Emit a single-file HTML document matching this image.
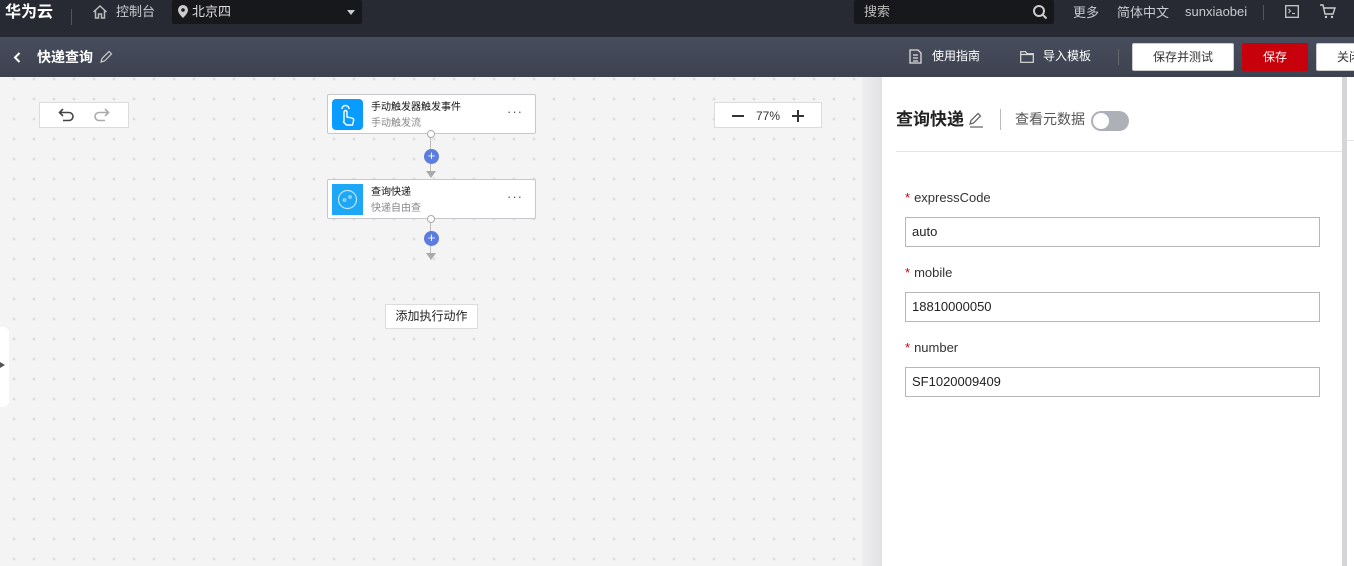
<!DOCTYPE html>
<html><head><meta charset="utf-8"><style>
*{margin:0;padding:0;box-sizing:border-box}
body{width:1354px;height:566px;overflow:hidden;font-family:"Liberation Sans","Noto Sans CJK SC",sans-serif;font-size:12px;position:relative;background:#f4f4f4;line-height:1.15}
.abs{position:absolute}
#top{left:0;top:0;width:1354px;height:37px;background:#272a33;color:#c8cad0}
#bar2{left:0;top:37px;width:1354px;height:40px;background:linear-gradient(#474d5c,#3c4250);color:#fff}
#canvas{left:0;top:77px;width:862px;height:489px;background-color:#f4f4f4;background-image:radial-gradient(circle,#dedede 1.3px,transparent 1.6px);background-size:20px 20px;background-position:4px 12px}
.box{background:#fff;border:1px solid #dcdcdc}
.node{background:#fff;border:1px solid #c8c8cc;border-radius:2px;width:209px;height:40px}
.node .ic{position:absolute;left:4px;top:4px;width:31px;height:31px;border-radius:4px;background:#0a9bff}
.node .t{position:absolute;left:43px;top:7px;font-size:10px;color:#111}
.node .s{position:absolute;left:43px;top:23px;font-size:10px;color:#888}
.node .d{position:absolute;right:12px;top:10px;color:#555;font-size:13px;letter-spacing:1px}
.plus{width:15px;height:15px;border-radius:50%;background:#5d7ce0;color:#fff;font-size:13px;line-height:14px;text-align:center}
.inp{left:905px;width:415px;height:30px;border:1px solid #b6b7bd;background:#fff;padding-left:6px;line-height:28px;font-size:13px;color:#222}
.lbl{left:905px;font-size:13px;color:#333}
.lbl b{color:#c7000b;font-weight:normal;margin-right:4px}
.btn{top:43px;height:28px;border-radius:2px;font-size:12px;text-align:center;line-height:26px}
</style></head><body>
<div id="top" class="abs">
 <div class="abs" style="left:5px;top:4px;font-size:16px;font-weight:bold;color:#fff">华为云</div>
 <div class="abs" style="left:71px;top:9px;width:1px;height:16px;background:#555"></div>
 <svg class="abs" style="left:92px;top:4px" width="16" height="16" viewBox="0 0 16 16"><path d="M1.5 8L8 2l6.5 6M3.5 6.5V14h3v-4h3v4h3V6.5" fill="none" stroke="#bbb" stroke-width="1.5"/></svg>
 <div class="abs" style="left:116px;top:5px;font-size:13px">控制台</div>
 <div class="abs" style="left:172px;top:0;width:190px;height:24px;background:#17181c;border-radius:2px">
  <svg class="abs" style="left:6px;top:5px" width="10" height="13" viewBox="0 0 10 13"><path d="M5 0a5 5 0 0 0-5 5c0 3.5 5 8 5 8s5-4.5 5-8a5 5 0 0 0-5-5z" fill="#ccc"/><circle cx="5" cy="5" r="1.8" fill="#17181c"/></svg>
  <div class="abs" style="left:20px;top:5px;font-size:13px;color:#ddd">北京四</div>
  <div class="abs" style="left:175px;top:10px;border:4px solid transparent;border-top:5px solid #ccc"></div>
 </div>
 <div class="abs" style="left:854px;top:0;width:200px;height:24px;background:#17181c;border-radius:2px">
  <div class="abs" style="left:10px;top:5px;font-size:13px;color:#bbb">搜索</div>
  <svg class="abs" style="left:178px;top:4px" width="16" height="16" viewBox="0 0 16 16"><circle cx="7" cy="7" r="5" fill="none" stroke="#ccc" stroke-width="2"/><path d="M10.5 10.5l4 4" stroke="#ccc" stroke-width="2"/></svg>
 </div>
 <div class="abs" style="left:1073px;top:6px;font-size:13px">更多</div>
 <div class="abs" style="left:1117px;top:6px;font-size:13px">简体中文</div>
 <div class="abs" style="left:1185px;top:5px;font-size:13px">sunxiaobei</div>
 <div class="abs" style="left:1263px;top:5px;width:1px;height:15px;background:#555"></div>
 <svg class="abs" style="left:1285px;top:5px" width="14" height="13" viewBox="0 0 14 13"><rect x=".7" y=".7" width="12.6" height="11.6" fill="none" stroke="#ccc" stroke-width="1.3"/><path d="M3.5 4l2 2-2 2M7 8.5h3" stroke="#ccc" fill="none"/></svg>
 <svg class="abs" style="left:1320px;top:4px" width="16" height="15" viewBox="0 0 16 15"><path d="M0 1h3l2 9h8l2-6H4" fill="none" stroke="#ccc" stroke-width="1.4"/><circle cx="6" cy="13" r="1.2" fill="#ccc"/><circle cx="12" cy="13" r="1.2" fill="#ccc"/></svg>
</div>
<div id="bar2" class="abs">
 <svg class="abs" style="left:13px;top:15px" width="8" height="11" viewBox="0 0 8 11"><path d="M6.5 1L2 5.5 6.5 10" fill="none" stroke="#fff" stroke-width="2"/></svg>
 <div class="abs" style="left:37px;top:12px;font-size:14px;font-weight:bold">快递查询</div>
 <svg class="abs" style="left:99px;top:13px" width="14" height="14" viewBox="0 0 14 14"><path d="M2 12l1-3.5 7-7 2.5 2.5-7 7z" fill="none" stroke="#ccc" stroke-width="1.2"/></svg>
 <svg class="abs" style="left:909px;top:12px" width="13" height="15" viewBox="0 0 13 15"><path d="M1 1h8l3 3v10H1z M4 6h5M4 9h5M4 12h5" fill="none" stroke="#ddd" stroke-width="1.3"/></svg>
 <div class="abs" style="left:932px;top:13px;font-size:12px">使用指南</div>
 <svg class="abs" style="left:1020px;top:14px" width="14" height="12" viewBox="0 0 14 12"><path d="M.7.7h5l1.3 2h6.3v8.6H.7z M.7 3.5h12.6" fill="none" stroke="#ddd" stroke-width="1.2"/></svg>
 <div class="abs" style="left:1043px;top:13px;font-size:12px">导入模板</div>
 <div class="abs" style="left:1118px;top:12px;width:1px;height:16px;background:#666"></div>
</div>
<div class="abs btn" style="left:1132px;width:102px;background:#fff;border:1px solid #ccc;color:#333">保存并测试</div>
<div class="abs btn" style="left:1242px;width:66px;background:#c7000b;color:#fff;line-height:28px">保存</div>
<div class="abs btn" style="left:1316px;width:50px;background:#fff;border:1px solid #ccc;color:#333;text-align:left;padding-left:20px">关闭</div>

<div id="canvas" class="abs"></div>
<div class="abs box" style="left:39px;top:102px;width:90px;height:26px">
 <svg class="abs" style="left:18px;top:5px" width="18" height="14" viewBox="0 0 18 14"><path d="M5 1L1.5 4.5 5 8M2 4.5h9a4 4 0 0 1 0 8H5" fill="none" stroke="#444" stroke-width="1.6"/></svg>
 <svg class="abs" style="left:52px;top:5px" width="18" height="14" viewBox="0 0 18 14"><path d="M13 1l3.5 3.5L13 8M16 4.5H7a4 4 0 0 0 0 8h6" fill="none" stroke="#aaa" stroke-width="1.6"/></svg>
</div>
<div class="abs box" style="left:714px;top:102px;width:108px;height:26px">
 <div class="abs" style="left:17px;top:12px;width:12px;height:1.5px;background:#333"></div>
 <div class="abs" style="left:41px;top:7px;font-size:12px;color:#333">77%</div>
 <div class="abs" style="left:77px;top:12px;width:12px;height:1.5px;background:#333"></div>
 <div class="abs" style="left:82.3px;top:7px;width:1.5px;height:12px;background:#333"></div>
</div>
<div class="abs node" style="left:327px;top:94px">
 <div class="ic"><svg width="31" height="31" viewBox="0 0 31 31"><path d="M12 22v-9a1.5 1.5 0 0 1 3 0v5l5 1c1.5.5 2 1.5 1.5 3l-1 4h-6l-3-3z M10 10a3.5 3.5 0 0 1 7 0" fill="none" stroke="#fff" stroke-width="1.4"/></svg></div>
 <div class="t">手动触发器触发事件</div><div class="s">手动触发流</div><div class="d">···</div>
</div>
<div class="abs" style="left:430px;top:134px;width:1px;height:42px;background:#bbb"></div>
<div class="abs" style="left:427px;top:130px;width:8px;height:8px;border-radius:50%;background:#fff;border:1px solid #aaa"></div>
<div class="abs plus" style="left:424px;top:149px">+</div>
<div class="abs" style="left:426px;top:171px;border:5px solid transparent;border-top:7px solid #aaa"></div>
<div class="abs node" style="left:327px;top:179px">
 <div class="ic" style="border-radius:0;background:#1ea7f5"><svg width="31" height="31" viewBox="0 0 31 31"><circle cx="15.5" cy="15.5" r="9" fill="none" stroke="#bfe6ff" stroke-width="1.2"/><circle cx="12.5" cy="16" r="1.3" fill="none" stroke="#bfe6ff"/><circle cx="18" cy="13" r="1.3" fill="none" stroke="#bfe6ff"/></svg></div>
 <div class="t">查询快递</div><div class="s">快递自由查</div><div class="d">···</div>
</div>
<div class="abs" style="left:430px;top:219px;width:1px;height:36px;background:#bbb"></div>
<div class="abs" style="left:427px;top:215px;width:8px;height:8px;border-radius:50%;background:#fff;border:1px solid #aaa"></div>
<div class="abs plus" style="left:424px;top:231px">+</div>
<div class="abs" style="left:426px;top:253px;border:5px solid transparent;border-top:7px solid #aaa"></div>
<div class="abs box" style="left:385px;top:304px;width:93px;height:25px;font-size:12px;color:#222;text-align:center;line-height:23px">添加执行动作</div>
<div class="abs" style="left:-10px;top:327px;width:19px;height:80px;background:#fff;border-radius:6px"></div>
<div class="abs" style="left:0;top:362px;border:3px solid transparent;border-left:5px solid #555"></div>

<div class="abs" style="left:862px;top:77px;width:20px;height:489px;background:linear-gradient(90deg,#eeeeee,#e2e2e4)"></div>
<div class="abs" style="left:882px;top:77px;width:460px;height:489px;background:#fff"></div>
<div class="abs" style="left:1342px;top:77px;width:5px;height:489px;background:#d6d6da"></div>
<div class="abs" style="left:1347px;top:77px;width:7px;height:489px;background:#fff"></div>
<div class="abs" style="left:1347px;top:140px;width:7px;height:1px;background:#e5e5e5"></div>
<div class="abs" style="left:896px;top:110px;font-size:17px;font-weight:bold;color:#222">查询快递</div>
<svg class="abs" style="left:968px;top:111px" width="17" height="17" viewBox="0 0 17 17"><path d="M2 13l1-3.5 7-7 2.5 2.5-7 7z M2 16h13" fill="none" stroke="#666" stroke-width="1.3"/></svg>
<div class="abs" style="left:1000px;top:109px;width:1px;height:21px;background:#bbb"></div>
<div class="abs" style="left:1015px;top:111px;font-size:14px;color:#555">查看元数据</div>
<div class="abs" style="left:1091px;top:111px;width:38px;height:20px;border-radius:10px;background:#aeb0b8"><div class="abs" style="left:2px;top:2px;width:16px;height:16px;border-radius:50%;background:#fff"></div></div>
<div class="abs" style="left:896px;top:151px;width:446px;height:1px;background:#e3e3e3"></div>
<div class="abs lbl" style="top:191px"><b>*</b>expressCode</div>
<div class="abs inp" style="top:217px">auto</div>
<div class="abs lbl" style="top:266px"><b>*</b>mobile</div>
<div class="abs inp" style="top:292px">18810000050</div>
<div class="abs lbl" style="top:341px"><b>*</b>number</div>
<div class="abs inp" style="top:367px">SF1020009409</div>
</body></html>
